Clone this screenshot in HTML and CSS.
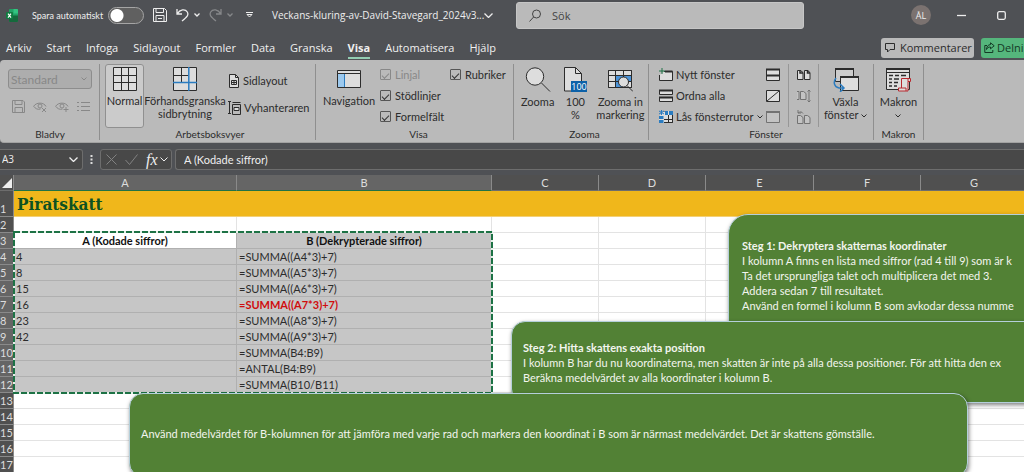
FILE: index.html
```html
<!DOCTYPE html>
<html lang="sv">
<head>
<meta charset="utf-8">
<title>Veckans-kluring-av-David-Stavegard_2024v3</title>
<link rel="stylesheet" href="styles.css">
</head>
<body>
<div class="app">
  <header class="titlebar">
    <svg class="logo" width="12" height="13" viewBox="0 0 12 13"><rect x="3" y="0" width="9" height="13" rx="1" fill="#21a366"/><path d="M3 6.500h9V12a1 1 0 0 1-1 1H4a1 1 0 0 1-1-1z" fill="#15693c"/><path d="M7.500 0H11a1 1 0 0 1 1 1v3.500H7.500z" fill="#33c481"/><rect x="0" y="3" width="7" height="7" rx="1" fill="#107c41"/><path d="M2 4.600l3 4M5 4.600l-3 4" stroke="#fff" stroke-width="1.100"/></svg>
    <label class="autosave"><span>Spara automatiskt</span><input type="checkbox" class="switch"></label>
    <div class="quick">
      <button class="tool" aria-label="Spara"><svg width="14" height="14" viewBox="0 0 14 14" class="line"><path d="M.5.5h11l2 2v11H.5zM3 .5v4h7.500v-4M3 13.500v-6h8v6M5 10.500h4"/></svg></button>
      <button class="tool undo" aria-label="Ångra"><svg width="13" height="14" viewBox="0 0 13 14" class="line thick"><path d="M1 1v5h5M1.200 5.800C4 1.500 9 .5 11.300 4c1.700 3-.3 5-5.300 9"/></svg><svg width="6" height="4" viewBox="0 0 6 4" class="line thick"><path d="M.5.5L3 3 5.500.5"/></svg></button>
      <button class="tool undo faded" aria-label="Gör om"><svg width="13" height="14" viewBox="0 0 13 14" class="line thick"><path d="M12 1v5H7M11.800 5.800C9 1.500 4 .5 1.700 4c-1.700 3 .3 5 5.300 9"/></svg><svg width="6" height="4" viewBox="0 0 6 4" class="line thick"><path d="M.5.5L3 3 5.500.5"/></svg></button>
      <button class="tool" aria-label="Anpassa"><svg width="7" height="6" viewBox="0 0 7 6" class="line"><path d="M0 .5h7M1 2.500h5L3.500 5z"/></svg></button>
    </div>
    <button class="docname">Veckans-kluring-av-David-Stavegard_2024v3...<svg width="9" height="5" viewBox="0 0 9 5" class="line thick"><path d="M.5.5l4 4 4-4"/></svg></button>
    <label class="search"><svg width="13" height="13" viewBox="0 0 13 13" class="line"><circle cx="7.500" cy="5" r="4"/><path d="M4.600 8L.5 12.500"/></svg><input type="text" placeholder="Sök" aria-label="Sök"></label>
    <button class="avatar">ÅL</button>
    <button class="tool win" aria-label="Minimera"><svg width="9" height="9" viewBox="0 0 9 9" class="line thick"><path d="M0 4.500h9"/></svg></button>
    <button class="tool win" aria-label="Maximera"><svg width="9" height="9" viewBox="0 0 9 9" class="line thick"><rect x=".7" y=".7" width="7.600" height="7.600" rx="1.500"/></svg></button>
  </header>

  <nav class="tabs">
    <button>Arkiv</button><button>Start</button><button>Infoga</button><button>Sidlayout</button><button>Formler</button><button>Data</button><button>Granska</button><button class="active">Visa</button><button>Automatisera</button><button>Hjälp</button>
    <button class="comments"><svg width="10" height="10" viewBox="0 0 10 10" class="line"><path d="M.5.5h9v6H5L2.500 9V6.500h-2z"/></svg>Kommentarer</button>
    <button class="share"><svg width="11" height="11" viewBox="0 0 11 11" class="line"><path d="M3 3.500H.8v7h8V8M6.500.8l3.700 3-3.700 3V5C4.500 5 3.300 5.600 2.500 7.500c.1-3 1.500-4.700 4-4.900z"/></svg>Delni</button>
  </nav>

  <section class="ribbon">
    <div class="group g-view">
      <div class="body column">
        <label class="combo"><select disabled aria-label="Bladvy"><option>Standard</option></select><svg width="6" height="4" viewBox="0 0 6 4" class="line"><path d="M.5.5L3 3 5.500.5"/></svg></label>
        <div class="icons">
          <svg width="13" height="13" viewBox="0 0 13 13" class="line"><path d="M.5.5h10.500l1.500 1.500v10.500H.5zM3 .5v4h7v-4M3 12.500v-5h7.500v5"/></svg>
          <svg width="14" height="13" viewBox="0 0 14 13" class="line"><path d="M.5 6.500C3 2 11 2 13 6.500M1 6.500c1 2 4 3.500 6.500 2.500"/><circle cx="7" cy="6" r="2"/><path d="M9 8l4 4M13 8l-4 4"/></svg>
          <svg width="14" height="13" viewBox="0 0 14 13" class="line"><path d="M.5 6.500C3 2 11 2 13 6.500M1 6.500c1 2 4 3.500 6.500 2.500"/><circle cx="7" cy="6" r="2"/><path d="M8.500 9.500h5M11 7v5"/></svg>
          <svg width="13" height="13" viewBox="0 0 13 13" class="line"><path d="M0 2.500h2M4 2.500h9M0 6.500h2M4 6.500h9M0 10.500h2M4 10.500h9"/></svg>
        </div>
      </div>
      <h2>Bladvy</h2>
    </div>

    <div class="group g-book">
      <div class="body">
        <button class="big selected"><svg width="24" height="24" viewBox="0 0 24 24" class="line"><path d="M.5.5h23v23H.5z" fill="#ddd"/><path d="M8.500 0v24M15.500 0v24M0 8.500h24M0 15.500h24"/></svg><span>Normal</span></button>
        <button class="big preview"><svg width="24" height="24" viewBox="0 0 24 24" class="line"><path d="M.5.5h23v23H.5z" fill="#ddd"/><path d="M8.500 0v15M0 8.500h15"/><path d="M15.800 0v24M0 15.500h24" stroke="#2b7cc0" stroke-width="1.500"/></svg><span>Förhandsgranska<br>sidbrytning</span></button>
        <div class="stack wide">
          <button class="small"><svg width="12" height="14" viewBox="0 0 12 14" class="line"><path d="M1.500.5h6l3 3v10h-9z" fill="#ddd"/><path d="M7.500.5v3h3M3.500 6.500h5v4h-5zM6 6.500v4M3.500 8.500h5"/></svg>Sidlayout</button>
          <button class="small"><svg width="13" height="14" viewBox="0 0 13 14" class="line"><path d="M0 .5h3M1.500.5v12M0 12.500h3M4.500 1.500h8M4.500 3.500h8v10h-8z"/><path d="M6 6.500h5v3H6z" fill="#ddd"/></svg>Vyhanteraren</button>
        </div>
      </div>
      <h2>Arbetsboksvyer</h2>
    </div>

    <div class="group g-show">
      <div class="body">
        <button class="big nav"><svg width="24" height="24" viewBox="0 0 24 24" class="line"><path d="M.5 3.500h23v17H.5z" fill="#ddd"/><path d="M1 7h7v13H1z" fill="#9cc9ee" stroke="none"/><path d="M.5 6.500h23"/><path d="M7.500 7v13" stroke="#2b7cc0"/></svg><span>Navigation</span></button>
        <div class="checks">
          <label class="off"><input type="checkbox" checked disabled>Linjal</label>
          <label><input type="checkbox" checked>Rubriker</label>
          <label><input type="checkbox" checked>Stödlinjer</label>
          <label class="newrow"><input type="checkbox" checked>Formelfält</label>
        </div>
      </div>
      <h2>Visa</h2>
    </div>

    <div class="group g-zoom">
      <div class="body">
        <button class="big"><svg width="26" height="25" viewBox="0 0 26 25" class="line"><circle cx="10" cy="9.500" r="8.700" fill="#ddd"/><path d="M16.500 16L25 24.500"/></svg><span>Zooma</span></button>
        <button class="big hundred"><svg width="24" height="25" viewBox="0 0 24 25" class="line"><path d="M1.500.5h11l6 6v17.500h-17z" fill="#ddd"/><path d="M12.500.5v6h6"/><rect x="8" y="14" width="16" height="11" fill="#0c61a8" stroke="none"/><text x="16" y="23" text-anchor="middle" class="icontext">100</text></svg><span>100<br>%</span></button>
        <button class="big"><svg width="26" height="25" viewBox="0 0 26 25" class="line"><path d="M1.500 3.500h23v17h-23z" fill="#ddd"/><path d="M9 9h16v6H9zM9 15h7v6H9z" fill="#4b93d8" stroke="none"/><path d="M1.500 3.500h23v17h-23zM8.500 3v17M16.500 3v17M1 8.500h23M1 14.500h23"/><circle cx="16.500" cy="15" r="5" fill="#ddd"/><path d="M20 18.500l6 6"/></svg><span>Zooma in<br>markering</span></button>
      </div>
      <h2>Zooma</h2>
    </div>

    <div class="group g-window">
      <div class="body">
        <div class="stack">
          <button class="small"><svg width="14" height="14" viewBox="0 0 14 14" class="line"><path d="M5 3.500h8.500v9H.5V7" fill="#ddd"/><path d="M6 3.500h7.500" stroke-width="2"/><path d="M3 0v6M0 3h6" stroke="#217346"/></svg>Nytt fönster</button>
          <button class="small"><svg width="14" height="14" viewBox="0 0 14 14" class="line"><path d="M.5 1.500h13v4H.5zM.5 8.500h13v4H.5z" fill="#ddd"/><path d="M0 1.500h14M0 8.500h14" stroke-width="2"/></svg>Ordna alla</button>
          <button class="small"><svg width="14" height="14" viewBox="0 0 14 14" class="line"><path d="M4 1.500h9.500v11H.5V6" fill="#ddd"/><path d="M6 1h8v4H6zM0 6h5v7H0z" fill="#2b7cc0" stroke="none"/><path d="M5 1v12M9.500 1v12M1 5.500h13M0 9.500h14" stroke="#ddd"/><path d="M5 9.500h9M9.500 5v8M13.500 5v7.500H5"/><path d="M2.500 0v5M0 1l5 3M5 1L0 4" stroke="#2b7cc0"/></svg>Lås fönsterrutor <svg width="6" height="4" viewBox="0 0 6 4" class="line"><path d="M.5.5L3 3 5.500.5"/></svg></button>
        </div>
        <div class="stack icononly">
          <button class="small" aria-label="Dela"><svg width="14" height="14" viewBox="0 0 14 14" class="line"><path d="M.5 1.500h13v11H.5z" fill="#ddd"/><path d="M0 1.500h14M0 7.500h14" stroke-width="2"/></svg></button>
          <button class="small" aria-label="Dölj"><svg width="14" height="14" viewBox="0 0 14 14" class="line"><path d="M.5 1.500h13v11H.5z" fill="#ddd"/><path d="M1 12L13 2"/></svg></button>
          <button class="small dim" aria-label="Ta fram"><svg width="14" height="14" viewBox="0 0 14 14" class="line"><path d="M.5 1.500h13v11H.5z" fill="#ccc"/><path d="M0 2h14" stroke-width="2"/></svg></button>
        </div>
        <div class="stack icononly ruled">
          <button class="small" aria-label="Visa sida vid sida"><svg width="14" height="14" viewBox="0 0 14 14" class="line"><path d="M.5 2.500h3l2.500 2v7H.5zM7.500 2.500h3l2.500 2v7H7.500z" fill="#ddd"/><path d="M3 2v3h3M10.500 2v3H13" stroke-width="1.500"/></svg></button>
          <button class="small dim" aria-label="Synkron rullning"><svg width="14" height="14" viewBox="0 0 14 14" class="line"><path d="M0 2.500h2v8H0M3.500 2.500h3l2.500 2v6H3.500z" fill="#ccc"/><path d="M12 1v12M10.500 2.500L12 1l1.500 1.500M10.500 11.500L12 13l1.500-1.500"/></svg></button>
          <button class="small dim" aria-label="Återställ fönsterplacering"><svg width="14" height="14" viewBox="0 0 14 14" class="line"><path d="M.5 5.500h3l2.500 2v6H.5zM7.500 5.500h3l2.500 2v6H7.500z" fill="#ccc"/><path d="M6 3.500c-1-2-3-2-5-.5M1 0v3h3"/></svg></button>
        </div>
        <button class="big switchwin"><svg width="26" height="25" viewBox="0 0 26 25" class="line"><path d="M2.500 1.500h18v13h-18z" fill="#ccc"/><path d="M2 2h19" stroke-width="2"/><path d="M7.500 9.500h18v14h-18z" fill="#ddd"/><path d="M7 10h19" stroke-width="2"/><path d="M3 11c-3 4-2 9 3 10h4M7 17l4 4-4 4" stroke="#2b7cc0" stroke-width="1.500"/></svg><span>Växla<br>fönster <svg width="6" height="4" viewBox="0 0 6 4" class="line inlinechev"><path d="M.5.5L3 3 5.500.5"/></svg></span></button>
      </div>
      <h2>Fönster</h2>
    </div>

    <div class="group g-macro">
      <div class="body">
        <button class="big"><svg width="26" height="25" viewBox="0 0 26 25" class="line"><path d="M1.500 1.500h23v21h-23z" fill="#ddd"/><path d="M1 2h24" stroke-width="2"/><path d="M1 5.500h24"/><path d="M4 8.500h4M10 8.500h4M16 8.500h5M4 12h3M9 12h5M4 15.500h3M9 15.500h4M4 19h3M9 19h3" stroke-width="1.300"/><path d="M16.500 11.500h9v3H23V24H13.500v-3h3z" fill="#ddd" stroke="#b8282f"/><path d="M23 14.500v-3M16.500 21H21v3" stroke="#b8282f"/></svg><span>Makron<br><svg width="6" height="4" viewBox="0 0 6 4" class="line inlinechev"><path d="M.5.5L3 3 5.500.5"/></svg></span></button>
      </div>
      <h2>Makron</h2>
    </div>
  </section>

  <section class="formulabar">
    <label class="namebox"><input type="text" value="A3" aria-label="Namnruta"><svg width="9" height="5" viewBox="0 0 9 5" class="line thick"><path d="M.5.5l4 4 4-4"/></svg></label>
    <svg class="dots" width="3" height="11" viewBox="0 0 3 11"><path d="M.5 1h2v2h-2zM.5 4.500h2v2h-2zM.5 8h2v2h-2z" fill="#ddd"/></svg>
    <div class="fx">
      <button class="tool faded" aria-label="Avbryt"><svg width="11" height="11" viewBox="0 0 11 11" class="line"><path d="M.5.5l10 10M10.500.5l-10 10"/></svg></button>
      <button class="tool faded" aria-label="Ange"><svg width="13" height="11" viewBox="0 0 13 11" class="line"><path d="M.5 6l4 4.500L12.500.5"/></svg></button>
      <button class="tool func">fx<svg width="8" height="5" viewBox="0 0 8 5" class="line"><path d="M.5.5L4 4 7.500.5"/></svg></button>
    </div>
    <input class="formula" type="text" value="A (Kodade siffror)" aria-label="Formelfält">
  </section>

  <main class="sheet">
    <table class="grid">
      <colgroup><col class="c-num"><col class="c-a"><col class="c-b"><col class="c-n"><col class="c-n"><col class="c-e"><col class="c-n"><col></colgroup>
      <thead><tr><th class="corner"><svg width="10" height="10" viewBox="0 0 10 10"><path d="M10 0v10H0z" fill="#eee"/></svg></th><th class="on">A</th><th class="on">B</th><th>C</th><th>D</th><th>E</th><th>F</th><th>G</th></tr></thead>
      <tbody>
        <tr class="title"><th>1</th><td colspan="7">Piratskatt</td></tr>
        <tr><th>2</th><td></td><td></td><td></td><td></td><td></td><td></td><td></td></tr>
        <tr class="sel heads"><th>3</th><td class="cursor">A (Kodade siffror)</td><td>B (Dekrypterade siffror)</td><td></td><td></td><td></td><td></td><td></td></tr>
        <tr class="sel"><th>4</th><td>4</td><td>=SUMMA((A4*3)+7)</td><td></td><td></td><td></td><td></td><td></td></tr>
        <tr class="sel"><th>5</th><td>8</td><td>=SUMMA((A5*3)+7)</td><td></td><td></td><td></td><td></td><td></td></tr>
        <tr class="sel"><th>6</th><td>15</td><td>=SUMMA((A6*3)+7)</td><td></td><td></td><td></td><td></td><td></td></tr>
        <tr class="sel"><th>7</th><td>16</td><td class="hit">=SUMMA((A7*3)+7)</td><td></td><td></td><td></td><td></td><td></td></tr>
        <tr class="sel"><th>8</th><td>23</td><td>=SUMMA((A8*3)+7)</td><td></td><td></td><td></td><td></td><td></td></tr>
        <tr class="sel"><th>9</th><td>42</td><td>=SUMMA((A9*3)+7)</td><td></td><td></td><td></td><td></td><td></td></tr>
        <tr class="sel"><th>10</th><td></td><td>=SUMMA(B4:B9)</td><td></td><td></td><td></td><td></td><td></td></tr>
        <tr class="sel"><th>11</th><td></td><td>=ANTAL(B4:B9)</td><td></td><td></td><td></td><td></td><td></td></tr>
        <tr class="sel"><th>12</th><td></td><td>=SUMMA(B10/B11)</td><td></td><td></td><td></td><td></td><td></td></tr>
        <tr><th>13</th><td></td><td></td><td></td><td></td><td></td><td></td><td></td></tr>
        <tr><th>14</th><td></td><td></td><td></td><td></td><td></td><td></td><td></td></tr>
        <tr><th>15</th><td></td><td></td><td></td><td></td><td></td><td></td><td></td></tr>
        <tr><th>16</th><td></td><td></td><td></td><td></td><td></td><td></td><td></td></tr>
        <tr><th>17</th><td></td><td></td><td></td><td></td><td></td><td></td><td></td></tr>
      </tbody>
    </table>
    <svg class="ants" width="480" height="163" viewBox="0 0 480 163"><rect x="1" y="1" width="478" height="161" fill="none" stroke="#e4f0e8" stroke-width="2"/><rect x="1" y="1" width="478" height="161" fill="none" stroke="#1d7245" stroke-width="2" stroke-dasharray="6 2"/></svg>
    <article class="note step1"><strong>Steg 1: Dekryptera skatternas koordinater</strong><br>I kolumn A finns en lista med siffror (rad 4 till 9) som är k<br>Ta det ursprungliga talet och multiplicera det med 3.<br>Addera sedan 7 till resultatet.<br>Använd en formel i kolumn B som avkodar dessa numme</article>
    <article class="note step2"><strong>Steg 2: Hitta skattens exakta position</strong><br>I kolumn B har du nu koordinaterna, men skatten är inte på alla dessa positioner. För att hitta den ex<br>Beräkna medelvärdet av alla koordinater i kolumn B.</article>
    <article class="note step3">Använd medelvärdet för B-kolumnen för att jämföra med varje rad och markera den koordinat i B som är närmast medelvärdet. Det är skattens gömställe.</article>
  </main>
</div>
</body>
</html>
```
FILE: styles.css
```css
* { box-sizing: border-box; }
html, body { height: 100%; margin: 0; }
body { overflow: hidden; font: 11px/13px "Open Sans", "Noto Sans", sans-serif; color: #2c2c2c; }
button, input, select { font: inherit; color: inherit; margin: 0; padding: 0; border: 0; background: none; }
svg { flex: none; display: block; }
.line { fill: none; stroke: currentColor; stroke-width: 1; }
.thick { stroke-width: 1.3; }
.app { height: 100%; display: flex; flex-direction: column; overflow: hidden; background: #4f5155; }

.titlebar { flex: none; display: flex; align-items: center; height: 30px; padding: 0 3px 0 6px; color: #eee; white-space: nowrap; }
.tool { display: flex; align-items: center; }
.faded { opacity: .35; }
.autosave { display: flex; flex: none; align-items: center; justify-content: space-between; width: 112px; margin-left: 14px; font: 9px/13px Lato, sans-serif; }
.switch { appearance: none; flex: none; width: 36px; height: 17px; border: 1px solid #a5a5a5; border-radius: 9px; background: radial-gradient(circle at 8px 50%, #fff 6px, transparent 7px) #606060; }
.quick { display: flex; flex: none; align-items: center; gap: 9px; margin-left: 9px; width: 119px; }
.undo { gap: 5px; }
.quick .tool:last-child { margin-left: 4px; }
.docname { display: flex; flex: none; align-items: center; justify-content: space-between; width: 221px; font-size: 10px; }
.search { display: flex; align-items: center; gap: 10px; width: 288px; height: 27px; margin-left: 23px; padding-left: 12px; border-radius: 3px; background: #bababa; border: 1px solid #c6c6c6; color: #444; }
.search input { width: 200px; }
.search input::placeholder { color: #444; opacity: 1; }
.avatar { width: 20px; height: 20px; margin-left: auto; border-radius: 50%; background: #7b7270; font-size: 9px; }
.win { width: 40px; justify-content: center; }
.avatar + .win { margin-left: 10px; }

.tabs { flex: none; display: flex; align-items: center; gap: 15px; height: 30px; padding: 5px 0 0 6px; color: #f0f0f0; white-space: nowrap; }
.tabs button { line-height: 18px; padding-top: 2px; border-bottom: 2px solid transparent; }
.tabs .active { font-weight: 700; border-color: #93cdb2; }
.tabs .comments, .tabs .share { display: flex; align-items: center; height: 20px; gap: 5px; padding: 0 4px; border: 0; border-radius: 3px; background: #bababa; color: #2c2c2c; }
.tabs .comments { margin-left: auto; width: 93px; }
.tabs .share { width: 43px; margin-left: -8px; gap: 2px; padding: 0 0 0 3px; border-radius: 3px 0 0 3px; background: #55b67c; color: #143a25; }

.ribbon { flex: none; display: flex; height: 83px; padding-top: 4px; border-radius: 4px 0 0 4px; background: #bababa; border-bottom: 1px solid #a2a2a2; font: 11px/13px Lato, sans-serif; }
.group { flex: none; display: flex; flex-direction: column; height: 76px; border-right: 1px solid #8f8f8f; }
.group h2 { margin: 0; font-size: 10px; line-height: 12px; font-weight: 400; text-align: center; }
.body { display: flex; height: 65px; align-items: flex-start; }
.column { flex-direction: column; }
.g-view { width: 100px; padding-left: 8px; padding-right: 7px; color: #888; }
.g-view h2 { color: #2c2c2c; }
.g-book { width: 216px; padding-left: 5px; }
.g-show { width: 198px; padding-left: 8px; }
.g-zoom { width: 135px; padding-left: 7px; }
.g-window { width: 225px; padding-left: 10px; }
.g-macro { width: 50px; }
.combo { display: flex; align-items: center; width: 84px; height: 20px; margin-top: 5px; padding: 0 4px 0 2px; border: 1px solid #8d8d8d; border-radius: 3px; background: #adadad; font-size: 12px; }
.combo select { appearance: none; flex: 1; opacity: 1; color: #888; }
.icons { display: flex; gap: 8px; margin: 11px 0 0 4px; }
.big { display: flex; flex-direction: column; align-items: center; justify-content: flex-start; gap: 3px; height: 64px; padding-top: 3px; text-align: center; white-space: nowrap; line-height: 13px; }
.inlinechev { display: inline-block; vertical-align: middle; }
.selected { width: 39px; border: 1px solid #909090; border-radius: 3px; background: #cbcbcb; padding-top: 2px; }
.preview { width: 80px; margin-left: 1px; }
.stack { display: grid; grid-auto-rows: 21px; }
.wide { grid-auto-rows: 27px; margin: 3px 0 0 3px; }
.small { display: flex; align-items: center; gap: 3px; white-space: nowrap; }
.dim { opacity: .5; }
.nav { width: 50px; }
.checks { display: grid; grid-template-columns: 70px auto; grid-auto-rows: 21px; margin-left: 6px; }
.checks label { display: flex; align-items: center; gap: 4px; }
.checks .newrow { grid-column: 1; }
.checks input { appearance: none; width: 11px; height: 11px; border: 1px solid #555; border-radius: 1px; display: grid; place-items: center; }
.checks input::after { content: ""; width: 6px; height: 3px; border: solid #333; border-width: 0 0 1px 1px; transform: rotate(-45deg); }
.checks .off { color: #888; }
.checks .off input, .off input::after { border-color: #888; }
.g-zoom .body { gap: 6px; }
.hundred { width: 30px; }
.icontext { font: 9px "Open Sans", sans-serif; fill: #fff; stroke: none; }
.g-window .stack:first-child { width: 107px; }
.icononly { width: 22px; height: 63px; }
.ruled { width: 31px; padding-left: 8px; border: solid #979797; border-width: 0 1px; }
.switchwin { width: 51px; margin-left: 1px; }
.g-macro .body { justify-content: center; }

.formulabar { flex: none; display: flex; align-items: center; height: 32px; padding-top: 1px; color: #eee; }
.namebox, .fx, .formula { height: 21px; border: 1px solid #6d6d6d; border-radius: 3px; background: #484848; }
.namebox { display: flex; align-items: center; justify-content: space-between; width: 83px; padding: 0 4px 0 2px; border-left: 0; border-radius: 0 3px 3px 0; font-size: 10px; }
.namebox input { width: 50px; }
.dots { margin: 0 7px; }
.fx { display: flex; align-items: center; gap: 8px; width: 72px; padding: 0 2px 0 5px; }
.func { gap: 2px; font: italic 16px/16px "Liberation Serif", serif; }
.formula { flex: 1; min-width: 0; margin-left: 3px; padding-left: 8px; border-right: 0; border-radius: 3px 0 0 3px; font: 11px Lato, sans-serif; }

.sheet { position: relative; flex: 1; overflow: hidden; background: #fff; font: 11px/15px Lato, sans-serif; }
.grid { table-layout: fixed; border-collapse: separate; border-spacing: 0; width: 100%; min-width: 1028px; }
.c-num { width: 14px; }
.c-a { width: 223px; }
.c-b { width: 255px; }
.c-n { width: 107px; }
.c-e { width: 108px; }
.grid th, .grid td { height: 16px; padding: 0 2px; line-height: 15px; border: solid #e3e3e3; border-width: 0 1px 1px 0; white-space: nowrap; overflow: hidden; }
.grid th { font-weight: 400; background: #505050; color: #ddd; border-color: #8a8a8a; }
.grid thead th { border-bottom-color: #6d6d6d; }
.grid thead .on { background: #656565; border-bottom-color: #217346; }
.grid thead .corner { padding: 0; background: #505050; }
.corner svg { margin-left: 2px; }
.grid tbody th { padding: 0; vertical-align: bottom; text-align: left; }
.grid .sel th { background: #656565; }
.grid .title td { height: 26px; padding-left: 3px; background: #f0b71b; border-color: #f3d077; color: #0d5122; font: bold 17px/24px "DejaVu Serif Condensed", "DejaVu Serif", serif; }
.grid .sel td:nth-child(2), .grid .sel td:nth-child(3) { background: #c6c6c6; border-color: #b0b0b0; }
.grid .sel .cursor.cursor { background: #fff; }
.grid .heads td { text-align: center; font-weight: 700; color: #111; }
.grid .sel .hit { color: #d00d0d; font-weight: 700; }
.ants { position: absolute; left: 13px; top: 56px; }
.note { position: absolute; border: 1px solid #b4cfda; border-radius: 14px; background: #528135; color: #f2f5ee; box-shadow: 1px 2px 4px rgba(0, 0, 0, .5); white-space: nowrap; overflow: hidden; }
.step1 { left: 728px; top: 39px; width: 420px; height: 130px; padding: 23px 13px; border-radius: 20px; }
.step2 { left: 511px; top: 146px; width: 620px; height: 82px; padding: 18px 11px; }
.step3 { left: 129px; top: 218px; width: 839px; height: 84px; padding: 32px 11px; }
```
